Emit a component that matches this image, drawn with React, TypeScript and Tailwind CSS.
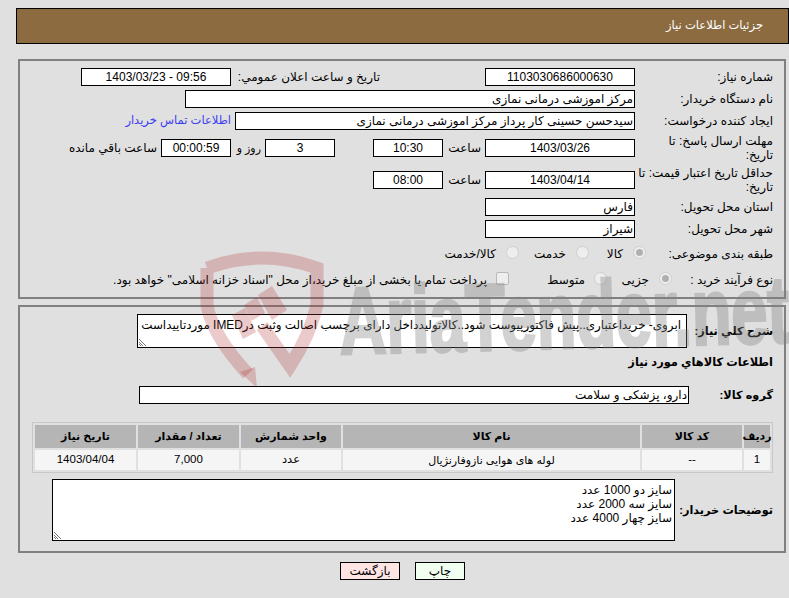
import React from "react";

function Box({ w, cls = "", children, dir }: { w: string; cls?: string; children?: React.ReactNode; dir?: "ltr" | "rtl" }) {
  return (
    <div dir={dir} className={`${w} h-[18px] border border-black bg-white text-[12px] leading-[16px] overflow-hidden whitespace-nowrap shrink-0 px-[1px] ${cls}`}>
      {children}
    </div>
  );
}

function Row({ label, children, cls = "", labelW = "w-[149px]" }: { label: React.ReactNode; children?: React.ReactNode; cls?: string; labelW?: string }) {
  return (
    <div className={`flex items-center h-[18px] ${cls}`}>
      <div className={`${labelW} shrink-0 text-[12px] leading-[14px] pr-[11px] pl-[2px]`}>{label}</div>
      {children}
    </div>
  );
}

function Radio({ on }: { on?: boolean }) {
  return (
    <span className="w-[13px] h-[13px] mb-[3px] rounded-full border border-[#cfcfcf] bg-[#eeeeee] flex items-center justify-center shrink-0">
      {on && <span className="w-[7px] h-[7px] rounded-full bg-[#b0b0b0]" />}
    </span>
  );
}

function Grip() {
  return (
    <svg className="absolute left-0 bottom-0" width="9" height="9" viewBox="0 0 9 9" stroke="#777" strokeWidth="1" fill="none">
      <path d="M1 1 L8 8 M1 4 L5 8 M1 6 L3 8" />
    </svg>
  );
}

function Watermark() {
  return (
    <svg className="absolute left-0 top-0 pointer-events-none" width="789" height="598" viewBox="0 0 789 598">
      <text
        x="340"
        y="354"
        transform="rotate(-1.5 340 354)"
        textLength="450"
        lengthAdjust="spacingAndGlyphs"
        fontFamily="'Liberation Sans', sans-serif"
        fontWeight="700"
        fontSize="95"
        fill="#808080"
        stroke="#808080"
        strokeWidth="3"
        opacity="0.35"
        direction="ltr"
      >
        AriaTender.net
      </text>
      <g fill="none" stroke="#b03030" strokeWidth="13" opacity="0.25">
        <path d="M207 268 Q262 248 317 268 L317 305 Q310 335 290 366 L262 326" />
        <path d="M207 268 L207 305 Q212 335 248 374" />
      </g>
      <g fill="#b03030" opacity="0.25">
        <polygon points="240,372 255,367 257,388" />
        <polygon points="232,315 245,308 256,332 243,339" />
        <polygon points="244,305 257,297 265,313 251,321" />
        <polygon points="258,295 272,286 287,310 272,320" />
      </g>
    </svg>
  );
}

const rtlBox = "text-right";
const head = "bg-[#b5b5b5] font-bold text-[11px] flex items-center justify-center h-[23px] whitespace-nowrap";
const cell = "bg-[#f5f5f5] text-[11.5px] flex items-center justify-center h-[20px]";
const boldLabel = "shrink-0 pr-[11px] text-[11.3px] font-bold whitespace-nowrap";

export default function App() {
  return (
    <div dir="rtl" className="relative w-[789px] h-[598px] overflow-hidden bg-[#e0e0e0] pt-2 text-black font-['Liberation_Sans','DejaVu_Sans',sans-serif]">
      <div className="w-[773px] h-[36px] border border-black bg-[#8c6b41] text-white text-[11.5px] flex items-center pr-[25px]">
        جزئیات اطلاعات نیاز
      </div>

      <div className="w-[768px] h-[240px] mt-[15px] mr-[3px] border-2 border-[#808080] pt-[7px]">
        <Row label="شماره نیاز:">
          <Box w="w-[150px]" cls="text-center">1103030686000630</Box>
          <div className="w-[254px] shrink-0 text-[12px] pr-[105px]">تاریخ و ساعت اعلان عمومي:</div>
          <Box w="w-[150px]" cls="text-center" dir="ltr">1403/03/23 - 09:56</Box>
        </Row>
        <Row label="نام دستگاه خریدار:" cls="mt-[4px]">
          <Box w="w-[450px]" cls={rtlBox}>مرکز اموزشی درمانی نمازی</Box>
        </Row>
        <Row label="ایجاد کننده درخواست:" cls="mt-[4px]">
          <Box w="w-[400px]" cls={rtlBox}>سیدحسن حسینی کار پرداز مرکز اموزشی درمانی نمازی</Box>
          <a className="text-[11.5px] text-[#3c3cf0] mr-[4px] whitespace-nowrap">اطلاعات تماس خریدار</a>
        </Row>
        <Row label={<>مهلت ارسال پاسخ: تا<br />تاریخ:</>} cls="mt-[9px]">
          <Box w="w-[150px]" cls="text-center">1403/03/26</Box>
          <div className="w-[42px] shrink-0 text-[12px] pr-[4px]">ساعت</div>
          <Box w="w-[70px]" cls="text-center">10:30</Box>
          <div className="w-[38px] shrink-0" />
          <Box w="w-[70px]" cls="text-center">3</Box>
          <div className="w-[34px] shrink-0 text-[11px] pr-[4px] whitespace-nowrap">روز و</div>
          <Box w="w-[70px]" cls="text-center bg-[#ffffee]">00:00:59</Box>
          <div className="text-[12px] pr-[4px] whitespace-nowrap">ساعت باقي مانده</div>
        </Row>
        <Row label={<>حداقل تاریخ اعتبار قیمت: تا<br />تاریخ:</>} cls="mt-[14px]">
          <Box w="w-[150px]" cls="text-center">1403/04/14</Box>
          <div className="w-[42px] shrink-0 text-[12px] pr-[4px]">ساعت</div>
          <Box w="w-[70px]" cls="text-center">08:00</Box>
        </Row>
        <Row label="استان محل تحویل:" cls="mt-[9px]">
          <Box w="w-[150px]" cls={rtlBox}>فارس</Box>
        </Row>
        <Row label="شهر محل تحویل:" cls="mt-[4px]">
          <Box w="w-[150px]" cls={rtlBox}>شیراز</Box>
        </Row>
        <Row label="طبقه بندی موضوعی:" labelW="w-[138px]" cls="mt-[7px] text-[12px]">
          <div className="w-[57px] flex items-center gap-[10px] shrink-0"><Radio on /><span>کالا</span></div>
          <div className="w-[70px] flex items-center gap-[10px] shrink-0"><Radio /><span>خدمت</span></div>
          <div className="flex items-center gap-[10px] shrink-0"><Radio /><span>کالا/خدمت</span></div>
        </Row>
        <Row label="نوع فرآیند خرید :" labelW="w-[112px]" cls="mt-[8px] text-[12px]">
          <div className="w-[65px] flex items-center gap-[10px] shrink-0"><Radio on /><span>جزیی</span></div>
          <div className="w-[98px] flex items-center gap-[9px] shrink-0"><Radio /><span>متوسط</span></div>
          <div className="flex items-center gap-[9px] shrink-0">
            <span className="w-[13px] h-[13px] mb-[3px] rounded-[2px] border border-[#b8b8b8] bg-[#eeeeee] shrink-0" />
            <span className="whitespace-nowrap">پرداخت تمام یا بخشی از مبلغ خرید،از محل "اسناد خزانه اسلامی" خواهد بود.</span>
          </div>
        </Row>
      </div>

      <div className="w-[768px] h-[248px] mt-[6px] mr-[3px] border-2 border-[#808080] pt-[7px]">
        <div className="flex items-center">
          <div className={`w-[97px] ${boldLabel}`}>شرح کلي نیاز:</div>
          <div className="relative w-[550px] h-[34px] border border-black bg-white text-[11.9px] leading-[14px] px-[5px] pt-[3px] whitespace-nowrap overflow-hidden">
            ابروی- خریداعتباری..پیش فاکتورپیوست شود..کالاتولیدداخل دارای برچسب اصالت وثبت درIMED موردتاییداست
            <Grip />
          </div>
        </div>
        <div className="mt-[7px] h-[14px] pr-[11px] text-[11.4px] leading-[14px] font-bold">اطلاعات کالاهاي مورد نیاز</div>
        <div className="flex items-center mt-[17px]">
          <div className={`w-[95px] ${boldLabel}`}>گروه کالا:</div>
          <Box w="w-[550px]" cls={rtlBox}>دارو، پزشکی و سلامت</Box>
        </div>
        <div className="mt-[18px] mr-[11px] w-[741px] border border-[#c8c8c8] p-[2px] grid grid-cols-[26px_100px_297px_100px_101px_101px] gap-[2px]">
          <div className={`${head} text-[10px]`}>ردیف</div>
          <div className={head}>کد کالا</div>
          <div className={head}>نام کالا</div>
          <div className={head}>واحد شمارش</div>
          <div className={head}>تعداد / مقدار</div>
          <div className={head}>تاریخ نیاز</div>
          <div className={cell}>1</div>
          <div className={cell}>--</div>
          <div className={`${cell} text-[11px]`}>لوله های هوایی نازوفارنژیال</div>
          <div className={cell}>عدد</div>
          <div className={cell}>7,000</div>
          <div className={cell}>1403/04/04</div>
        </div>
        <div className="flex items-center mt-[6px]">
          <div className={`w-[109px] ${boldLabel}`}>توضیحات خریدار:</div>
          <div className="relative w-[623px] h-[62px] border border-black bg-white text-[12px] leading-[14px] px-[2px] pt-[3px]">
            <div>سایز دو 1000 عدد</div>
            <div>سایز سه 2000 عدد</div>
            <div>سایز چهار 4000 عدد</div>
            <Grip />
          </div>
        </div>
      </div>

      <div className="flex mt-[9px] mr-[324px] gap-[15px] text-[12px]">
        <div className="w-[50px] h-[18px] border border-black bg-[#f0fff0] flex items-center justify-center">چاپ</div>
        <div className="w-[60px] h-[18px] border border-black bg-[#ffe4e4] flex items-center justify-center">بازگشت</div>
      </div>

      <Watermark />
    </div>
  );
}
